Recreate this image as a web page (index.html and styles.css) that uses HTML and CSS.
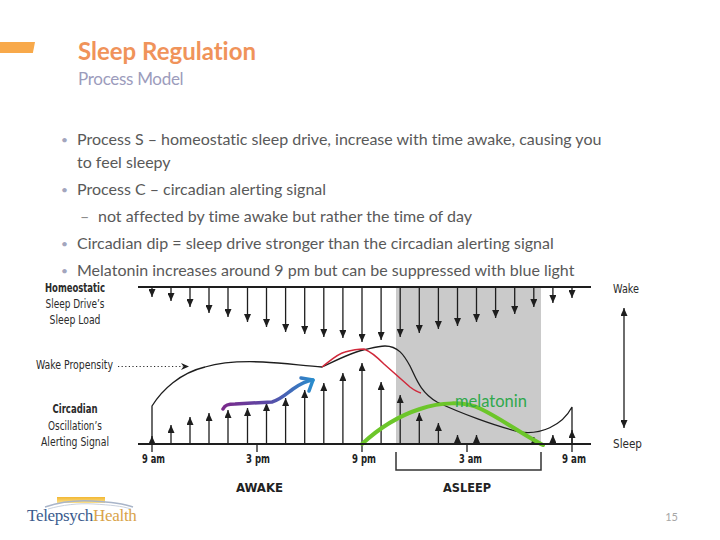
FILE: index.html
```html
<!DOCTYPE html>
<html>
<head>
<meta charset="utf-8">
<link rel="stylesheet" href="styles.css">
</head>
<body>
<div class="slide">
  <header class="header">
    <div class="accent"></div>
    <div class="titles">
      <h1 class="title">Sleep Regulation</h1>
      <div class="subtitle">Process Model</div>
    </div>
  </header>

  <ul class="bullets">
    <li>Process S – homeostatic sleep drive, increase with time awake, causing you to feel sleepy</li>
    <li>Process C – circadian alerting signal
      <ul class="sub">
        <li>not affected by time awake but rather the time of day</li>
      </ul>
    </li>
    <li>Circadian dip = sleep drive stronger than the circadian alerting signal</li>
    <li>Melatonin increases around 9 pm but can be suppressed with blue light</li>
  </ul>

  <svg class="diagram" width="720" height="217" viewBox="0 278 720 217" xmlns="http://www.w3.org/2000/svg">
    <defs>
      <marker id="ah" viewBox="0 0 8 7" refX="8" refY="3.5" markerWidth="8" markerHeight="7" markerUnits="userSpaceOnUse" orient="auto-start-reverse">
        <path d="M0,0 L8,3.5 L0,7 z" class="head"/>
      </marker>
      <linearGradient id="pb" gradientUnits="userSpaceOnUse" x1="223" y1="0" x2="313" y2="0">
        <stop offset="0" stop-color="#7a2a8c"/>
        <stop offset="0.5" stop-color="#5a4aa6"/>
        <stop offset="1" stop-color="#2a8ccc"/>
      </linearGradient>
    </defs>

    <rect class="shade" x="396" y="288" width="145" height="156"/>

    <!-- homeostatic (down) arrows -->
    <g class="arrows" marker-end="url(#ah)">
      <line x1="152" y1="288" x2="152" y2="297"/>
      <line x1="171" y1="288" x2="171" y2="301"/>
      <line x1="190" y1="288" x2="190" y2="307"/>
      <line x1="209" y1="288" x2="209" y2="313"/>
      <line x1="228" y1="288" x2="228" y2="317"/>
      <line x1="247.5" y1="288" x2="247.5" y2="322"/>
      <line x1="266.5" y1="288" x2="266.5" y2="327"/>
      <line x1="285.6" y1="288" x2="285.6" y2="332"/>
      <line x1="304.7" y1="288" x2="304.7" y2="334"/>
      <line x1="323.8" y1="288" x2="323.8" y2="337"/>
      <line x1="342.9" y1="288" x2="342.9" y2="338"/>
      <line x1="362" y1="288" x2="362" y2="342"/>
      <line x1="381.1" y1="288" x2="381.1" y2="340"/>
      <line x1="400.2" y1="288" x2="400.2" y2="337"/>
      <line x1="419.3" y1="288" x2="419.3" y2="333"/>
      <line x1="438.4" y1="288" x2="438.4" y2="329"/>
      <line x1="457.5" y1="288" x2="457.5" y2="326"/>
      <line x1="476.5" y1="288" x2="476.5" y2="322"/>
      <line x1="495.6" y1="288" x2="495.6" y2="318"/>
      <line x1="514.7" y1="288" x2="514.7" y2="314"/>
      <line x1="533.8" y1="288" x2="533.8" y2="307"/>
      <line x1="552.9" y1="288" x2="552.9" y2="303"/>
      <line x1="572" y1="288" x2="572" y2="298"/>
    </g>

    <!-- circadian (up) arrows -->
    <g class="arrows" marker-end="url(#ah)">
      <line x1="152" y1="444" x2="152" y2="436"/>
      <line x1="171" y1="444" x2="171" y2="425"/>
      <line x1="190" y1="444" x2="190" y2="417"/>
      <line x1="209" y1="444" x2="209" y2="413"/>
      <line x1="228" y1="444" x2="228" y2="410"/>
      <line x1="247.5" y1="444" x2="247.5" y2="408"/>
      <line x1="266.5" y1="444" x2="266.5" y2="403"/>
      <line x1="285.6" y1="444" x2="285.6" y2="398"/>
      <line x1="304.7" y1="444" x2="304.7" y2="390"/>
      <line x1="323.8" y1="444" x2="323.8" y2="383"/>
      <line x1="342.9" y1="444" x2="342.9" y2="373"/>
      <line x1="362" y1="444" x2="362" y2="363"/>
      <line x1="381.1" y1="444" x2="381.1" y2="382"/>
      <line x1="400.2" y1="444" x2="400.2" y2="395"/>
      <line x1="419.3" y1="444" x2="419.3" y2="413"/>
      <line x1="438.4" y1="444" x2="438.4" y2="423"/>
      <line x1="457.5" y1="444" x2="457.5" y2="435"/>
      <line x1="476.5" y1="444" x2="476.5" y2="435"/>
      <line x1="533.8" y1="444" x2="533.8" y2="437"/>
      <line x1="552.9" y1="444" x2="552.9" y2="435"/>
      <line x1="572" y1="444" x2="572" y2="430"/>
    </g>

    <!-- axis ticks -->
    <g class="tick">
      <line x1="152" y1="444" x2="152" y2="452"/>
      <line x1="257" y1="444" x2="257" y2="452"/>
      <line x1="362" y1="444" x2="362" y2="452"/>
      <line x1="467" y1="444" x2="467" y2="452"/>
      <line x1="572" y1="444" x2="572" y2="452"/>
    </g>

    <!-- wake propensity curve -->
    <path class="curve" d="M152,444 V406 C162,390 180,373 205,367 C222,362 240,361 263,362 C285,363 305,366 322,367 C335,361 350,353 363,350 C372,348 378,346 385,346 C398,346 404,355 410,366 C416,378 420,392 437,402 C460,413 495,426 520,432 C540,435 562,426 572,407 V444"/>
    <!-- red shifted curve -->
    <path class="red" d="M322,367 C330,361 337,354 345,352 C352,350 358,349 364,349 C372,352 378,358 384,364 C393,372 402,380 410,387 C414,390 417,392 421,393"/>
    <!-- melatonin -->
    <path class="green" d="M362,444 C376,431 395,417 420,409 C440,402 465,401 481,409 C500,418 525,436 543,445"/>
    <text class="mel" x="455" y="407" textLength="72" lengthAdjust="spacingAndGlyphs">melatonin</text>
    <!-- purple/blue hand drawn arrow -->
    <path class="pb" d="M223,409 C225,405 228,404 235,404 L272,402 C280,400 285,395 293,389 C300,384 306,381 313,380"/>
    <path class="pb" d="M301,378 L313,380 L309,391"/>

    <!-- baselines -->
    <line class="base" x1="138" y1="287" x2="591" y2="287"/>
    <line class="base" x1="138" y1="444" x2="591" y2="444"/>

    <!-- left labels -->
    <text class="lbl b" x="75" y="292" text-anchor="middle" textLength="60" lengthAdjust="spacingAndGlyphs">Homeostatic</text>
    <text class="lbl" x="75" y="308" text-anchor="middle" textLength="59" lengthAdjust="spacingAndGlyphs">Sleep Drive’s</text>
    <text class="lbl" x="75" y="324" text-anchor="middle" textLength="51" lengthAdjust="spacingAndGlyphs">Sleep Load</text>
    <text class="lbl" x="36" y="369" textLength="77" lengthAdjust="spacingAndGlyphs">Wake Propensity</text>
    <line class="dots" x1="118" y1="366.5" x2="183" y2="366.5"/>
    <path class="head" d="M181,363 L189,366.5 L181,370 L183.5,366.5 z"/>
    <text class="lbl b" x="75" y="413" text-anchor="middle" textLength="45" lengthAdjust="spacingAndGlyphs">Circadian</text>
    <text class="lbl" x="75" y="430" text-anchor="middle" textLength="54" lengthAdjust="spacingAndGlyphs">Oscillation’s</text>
    <text class="lbl" x="75" y="446" text-anchor="middle" textLength="68" lengthAdjust="spacingAndGlyphs">Alerting Signal</text>

    <!-- axis labels -->
    <text class="ax" x="142" y="463" textLength="23" lengthAdjust="spacingAndGlyphs">9 am</text>
    <text class="ax" x="246" y="463" textLength="24" lengthAdjust="spacingAndGlyphs">3 pm</text>
    <text class="ax" x="352" y="463" textLength="24" lengthAdjust="spacingAndGlyphs">9 pm</text>
    <text class="ax" x="459" y="463" textLength="23" lengthAdjust="spacingAndGlyphs">3 am</text>
    <text class="ax" x="562" y="463" textLength="24" lengthAdjust="spacingAndGlyphs">9 am</text>

    <path class="bracket" d="M396,452 V470 H541 V452"/>
    <text class="ax big" x="236" y="492" textLength="47" lengthAdjust="spacingAndGlyphs">AWAKE</text>
    <text class="ax big" x="443" y="492" textLength="48" lengthAdjust="spacingAndGlyphs">ASLEEP</text>

    <!-- right scale -->
    <text class="lbl" x="613" y="293" textLength="26" lengthAdjust="spacingAndGlyphs">Wake</text>
    <line class="dbl" x1="624" y1="308" x2="624" y2="428" marker-start="url(#ah)" marker-end="url(#ah)"/>
    <text class="lbl" x="613" y="448" textLength="29" lengthAdjust="spacingAndGlyphs">Sleep</text>
  </svg>

  <footer class="footer">
    <div class="logo">
      <svg class="logo-mark" width="130" height="15" viewBox="15 495 130 15" xmlns="http://www.w3.org/2000/svg">
        <defs>
          <linearGradient id="gold" x1="0" y1="0" x2="0" y2="1">
            <stop offset="0" stop-color="#f2b733"/>
            <stop offset="1" stop-color="#fbe08a"/>
          </linearGradient>
        </defs>
        <rect x="57" y="497" width="48" height="6" fill="url(#gold)"/>
        <path class="swoosh" d="M45,507 C60,502 75,500 92,501 C110,502 122,503 133,507"/>
        <path class="swoosh thin" d="M48,509 C62,505 78,503 94,504 C110,505 122,506 131,509"/>
      </svg>
      <div class="logo-text"><span class="tp">Telepsych</span><span class="hl">Health</span></div>
    </div>
    <div class="pagenum">15</div>
  </footer>
</div>
</body>
</html>
```

FILE: styles.css
```css
html, body {
  margin: 0;
  padding: 0;
}
body {
  width: 720px;
  height: 540px;
  overflow: hidden;
  background: #ffffff;
  font-family: Lato, "Open Sans", sans-serif;
  font-variant-ligatures: none;
  font-feature-settings: "liga" 0, "clig" 0;
}
.slide {
  width: 720px;
  height: 540px;
  display: flex;
  flex-direction: column;
}
.header {
  display: flex;
  align-items: flex-start;
  height: 118px;
  padding-top: 39px;
  box-sizing: border-box;
  flex: none;
}
.accent {
  width: 35px;
  height: 11px;
  margin-top: 3px;
  background: #f8a94a;
  clip-path: polygon(0 0, 100% 0, 94% 100%, 0 100%);
  flex: none;
}
.titles {
  margin-left: 43px;
}
.title {
  margin: 0;
  font-size: 24px;
  line-height: 24px;
  font-weight: 700;
  color: #f0935a;
}
.subtitle {
  margin-top: 7px;
  font-size: 17px;
  line-height: 18px;
  letter-spacing: -0.3px;
  color: #9c9cbc;
}
.bullets {
  list-style: none;
  margin: 10px 0 0 0;
  padding: 0 0 0 77px;
  width: 540px;
  font-size: 16px;
  line-height: 22px;
  color: #595959;
  flex: none;
  height: 150px;
}
.bullets > li {
  margin-top: 4.5px;
}
.bullets > li:first-child {
  margin-top: 0;
}
.bullets > li::before {
  content: "•";
  display: inline-block;
  width: 16px;
  margin-left: -16px;
  color: #a3a6bd;
  font-size: 12px;
  vertical-align: 1px;
}
.sub {
  list-style: none;
  margin: 4.5px 0 0 0;
  padding: 0 0 0 21px;
}
.sub > li::before {
  content: "–";
  display: inline-block;
  width: 18px;
  margin-left: -18px;
  color: #8c8c8c;
}
.diagram {
  display: block;
  flex: none;
}
.shade {
  fill: #cacaca;
}
.arrows line {
  stroke: #1e1e1e;
  stroke-width: 1.3;
}
.head {
  fill: #1e1e1e;
}
.tick line {
  stroke: #1e1e1e;
  stroke-width: 1.3;
}
.base {
  stroke: #1e1e1e;
  stroke-width: 2;
}
.curve {
  fill: none;
  stroke: #1e1e1e;
  stroke-width: 1.3;
}
.red {
  fill: none;
  stroke: #d0283a;
  stroke-width: 1.5;
}
.green {
  fill: none;
  stroke: #6cc62a;
  stroke-width: 4;
  stroke-linecap: round;
}
.mel {
  font-family: Lato, "Open Sans", sans-serif;
  font-size: 17px;
  fill: #2fa84c;
}
.pb {
  fill: none;
  stroke: url(#pb);
  stroke-width: 3.5;
  stroke-linecap: round;
  stroke-linejoin: round;
}
.lbl {
  font-family: "DejaVu Sans Condensed", "DejaVu Sans", sans-serif;
  font-stretch: condensed;
  font-size: 12px;
  fill: #2b2b2b;
}
.lbl.b {
  font-weight: 700;
}
.dots {
  stroke: #2b2b2b;
  stroke-width: 1.2;
  stroke-dasharray: 1.2 2.4;
}
.ax {
  font-family: "DejaVu Sans Condensed", "DejaVu Sans", sans-serif;
  font-stretch: condensed;
  font-weight: 700;
  font-size: 12px;
  fill: #222;
}
.ax.big {
  font-size: 12.5px;
}
.bracket {
  fill: none;
  stroke: #333;
  stroke-width: 1.5;
}
.dbl {
  stroke: #1e1e1e;
  stroke-width: 1.3;
}
.footer {
  flex: 1;
  display: flex;
  justify-content: space-between;
  align-items: flex-start;
  padding: 0 42px 0 15px;
}
.logo {
  display: flex;
  flex-direction: column;
}
.logo-mark {
  display: block;
}
.swoosh {
  fill: none;
  stroke: #a9b5c9;
  stroke-width: 1.4;
}
.swoosh.thin {
  stroke: #c9d1de;
  stroke-width: 1;
}
.logo-text {
  margin: -3px 0 0 12px;
  font-family: "Liberation Serif", "Times New Roman", serif;
  font-size: 17px;
  line-height: 17px;
  letter-spacing: -0.3px;
  white-space: nowrap;
}
.tp {
  color: #3b5b8d;
}
.hl {
  color: #d9a34a;
}
.pagenum {
  margin-top: 15px;
  font-size: 11px;
  line-height: 13px;
  color: #a6a6a6;
}
```
